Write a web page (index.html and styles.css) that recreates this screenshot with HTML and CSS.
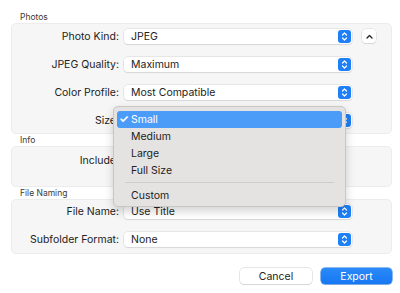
FILE: index.html
```html
<!DOCTYPE html>
<html lang="en">
<head>
    <meta charset="UTF-8">
    <title>Export</title>
    <link rel="stylesheet" href="styles.css">
</head>
<body>
    <div class="sheet">
        <div class="section-title">Photos</div>
        <div class="box box-photos">
            <div class="row">
                <label>Photo Kind:</label>
                <div class="popup">JPEG<span class="stepper"></span></div>
                <button class="collapse"><svg width="7" height="5" viewBox="0 0 7 5"><path d="M1 4 L3.5 1.5 L6 4" fill="none" stroke="#222" stroke-width="1.3" stroke-linecap="round" stroke-linejoin="round"/></svg></button>
            </div>
            <div class="row">
                <label>JPEG Quality:</label>
                <div class="popup">Maximum<span class="stepper"></span></div>
            </div>
            <div class="row">
                <label>Color Profile:</label>
                <div class="popup">Most Compatible<span class="stepper"></span></div>
            </div>
            <div class="row">
                <label>Size:</label>
                <!-- value is shown by the open menu below -->
                <div class="popup"><span class="stepper"></span></div>
            </div>
        </div>

        <div class="section-title">Info</div>
        <div class="box box-info">
            <div class="row">
                <label>Include:</label>
                <div class="checks"></div>
            </div>
        </div>

        <div class="section-title">File Naming</div>
        <div class="box box-naming">
            <div class="row">
                <label>File Name:</label>
                <div class="popup">Use Title<span class="stepper"></span></div>
            </div>
            <div class="row">
                <label>Subfolder Format:</label>
                <div class="popup">None<span class="stepper"></span></div>
            </div>
        </div>

        <div class="actions">
            <button class="btn">Cancel</button>
            <button class="btn btn-primary">Export</button>
        </div>

        <!-- open popup menu for Size -->
        <div class="menu">
            <div class="menu-item selected"><span class="tick">✓</span>Small</div>
            <div class="menu-item">Medium</div>
            <div class="menu-item">Large</div>
            <div class="menu-item">Full Size</div>
            <div class="menu-sep"></div>
            <div class="menu-item">Custom</div>
        </div>
    </div>
</body>
</html>
```

FILE: styles.css
```css
* {
    margin: 0;
    padding: 0;
    box-sizing: border-box;
}
body, html {
    height: 100%;
    background-color: #ffffff;
    font-family: "Inter", "Liberation Sans", sans-serif;
    color: #222;
}
.sheet {
    position: relative;
    padding-top: 11px;
}
.section-title {
    margin-left: 20px;
    height: 12px;
    font-size: 8.5px;
    line-height: 12px;
    color: #3a3a3a;
}
.box {
    margin: 0 8px 0 11px;
    background-color: #f6f6f6;
    border: 1px solid #ececec;
    border-radius: 5px;
}
.box-photos {
    height: 111px;
    padding-top: 4px;
}
.box-info {
    height: 41px;
    padding-top: 5px;
}
.box-naming {
    height: 55px;
    padding-top: 3px;
}
.row {
    display: grid;
    grid-template-columns: 107px 228px auto;
    column-gap: 5px;
    align-items: center;
    height: 16px;
    margin-bottom: 12px;
}
.row label {
    text-align: right;
    font-size: 10.5px;
}
.popup {
    position: relative;
    height: 15px;
    padding-left: 7px;
    background-color: #fff;
    border-radius: 4px;
    box-shadow: 0 0 0 0.5px #d6d6d6, 0 1px 1px rgba(0, 0, 0, 0.12);
    font-size: 10.5px;
    line-height: 15px;
}
.stepper {
    position: absolute;
    right: 1px;
    top: 1px;
    width: 13px;
    height: 13px;
    border-radius: 3px;
    background-color: #1e7ff6;
    background-image: url("data:image/svg+xml;utf8,<svg xmlns='http://www.w3.org/2000/svg' width='13' height='13' viewBox='0 0 13 13'><path d='M4.5 5 L6.5 3 L8.5 5 M4.5 8 L6.5 10 L8.5 8' fill='none' stroke='white' stroke-width='1.2' stroke-linecap='round' stroke-linejoin='round'/></svg>");
}
.collapse {
    margin-left: 5px;
    width: 14px;
    height: 14px;
    display: flex;
    align-items: center;
    justify-content: center;
    background-color: #fff;
    border: none;
    border-radius: 4px;
    box-shadow: 0 0 0 0.5px #d6d6d6, 0 1px 1px rgba(0, 0, 0, 0.12);
}
.actions {
    display: flex;
    justify-content: flex-end;
    gap: 9px;
    margin: 14px 8px 0 0;
}
.btn {
    width: 72px;
    height: 16px;
    border: none;
    border-radius: 4px;
    background-color: #fff;
    box-shadow: 0 0 0 0.5px #d0d0d0, 0 1px 1px rgba(0, 0, 0, 0.12);
    font-family: inherit;
    font-size: 10.5px;
    color: #222;
}
.btn-primary {
    width: 71px;
    background: linear-gradient(#2a8af8, #1677f3);
    color: #fff;
    box-shadow: 0 0 0 0.5px #1a72e0, 0 1px 1px rgba(0, 0, 0, 0.12);
}
.menu {
    position: absolute;
    left: 113px;
    top: 106px;
    width: 233px;
    height: 101px;
    padding: 4px 3px;
    background-color: #e5e3e1;
    border: 1px solid #c9c7c5;
    border-radius: 5px;
    box-shadow: 0 4px 10px rgba(0, 0, 0, 0.18);
}
.menu-item {
    height: 17px;
    padding-left: 14px;
    font-size: 10.5px;
    line-height: 17px;
    color: #222;
    border-radius: 3px;
}
.menu-item.selected {
    position: relative;
    background-color: #4b9cf8;
    color: #fff;
}
.tick {
    position: absolute;
    left: 2px;
    font-size: 11px;
    font-weight: bold;
}
.menu-sep {
    height: 1px;
    margin: 3px 8px 4px 8px;
    background-color: #cfcdcb;
}
```
